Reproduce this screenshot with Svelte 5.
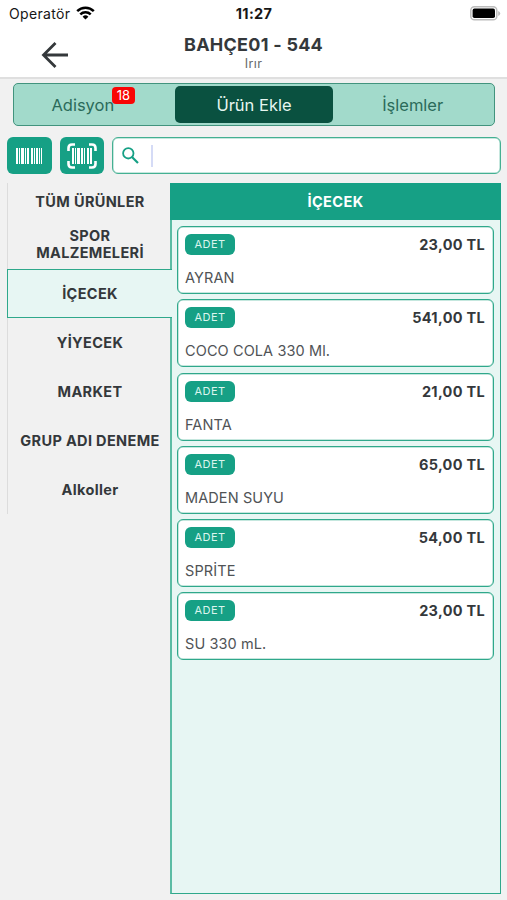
<script>
  let tabs = [
    { label: 'Adisyon', badge: 18 },
    { label: 'Ürün Ekle' },
    { label: 'İşlemler' }
  ];
  let groups = [
    'TÜM ÜRÜNLER',
    'SPOR MALZEMELERİ',
    'İÇECEK',
    'YİYECEK',
    'MARKET',
    'GRUP ADI DENEME',
    'Alkoller'
  ];
  let products = [
    { name: 'AYRAN', price: '23,00' },
    { name: 'COCO COLA 330 Ml.', price: '541,00' },
    { name: 'FANTA', price: '21,00' },
    { name: 'MADEN SUYU', price: '65,00' },
    { name: 'SPRİTE', price: '54,00' },
    { name: 'SU 330 mL.', price: '23,00' }
  ];

  let activeTab = 'Ürün Ekle';
  let activeGroup = 'İÇECEK';
  let search = '';
</script>

<div class="screen">
  <header>
    <div class="status">
      <div class="carrier">
        <span>Operatör</span>
        <svg width="19" height="14" viewBox="0 0 19 14" fill="none" stroke="#000" stroke-width="2.5">
          <path d="M1.2 5.2a11.7 11.7 0 0 1 16.6 0" />
          <path d="M4.3 8.4a7.4 7.4 0 0 1 10.4 0" />
          <path d="M9.5 13.6 6.6 10.7a4.1 4.1 0 0 1 5.8 0z" fill="#000" stroke="none" />
        </svg>
      </div>
      <b>11:27</b>
      <svg class="battery" width="31" height="15" viewBox="0 0 31 15">
        <rect x=".8" y=".8" width="26" height="13" rx="3.6" fill="#fff" stroke="#bcbcbc" stroke-width="1.5" />
        <rect x="2.6" y="2.6" width="22.4" height="9.4" rx="1.8" fill="#000" />
        <path d="M28.2 5v5q2-.8 2-2.500t-2-2.500z" fill="#bcbcbc" />
      </svg>
    </div>
    <div class="title">
      <button class="back" aria-label="Geri">
        <svg width="28" height="26" viewBox="0 0 28 26" fill="none" stroke="#34383b" stroke-width="2.8">
          <path d="M27 13H3M14.500 1 2.500 13l12 12" />
        </svg>
      </button>
      <h1>BAHÇE01 - 544</h1>
      <small>Irır</small>
    </div>
  </header>

  <nav>
    {#each tabs as tab}
      <button class="tab" class:active={tab.label === activeTab} on:click={() => (activeTab = tab.label)}>
        {tab.label}
        {#if tab.badge}<span class="badge">{tab.badge}</span>{/if}
      </button>
    {/each}
  </nav>

  <div class="tools">
    <button class="scan" aria-label="Barkod">
      <svg width="26" height="16" viewBox="0 0 26 16" fill="#fff">
        <path d="M0 0h2v16H0zM3 0h1v16H3zM5 0h3v16H5zM9 0h1v16H9zM11 0h2v16h-2zM15 0h2v16h-2zM18 0h1v16h-1zM20 0h2v16h-2zM23 0h1v16h-1zM25 0h1v16h-1z" />
      </svg>
    </button>
    <button class="scan" aria-label="Barkod tara">
      <svg width="30" height="26" viewBox="0 0 30 26">
        <path d="M1.500 8V5q0-3.500 3.500-3.500h3M22 1.500h3q3.500 0 3.500 3.500v3M28.500 18v3q0 3.500-3.500 3.500h-3M8 24.500H5q-3.500 0-3.500-3.500v-3" fill="none" stroke="#fff" stroke-width="2.6" />
        <path d="M5 5h2v16H5zM8 5h1v16H8zM10 5h3v16h-3zM14 5h2v16h-2zM17 5h1v16h-1zM20 5h2v16h-2zM23 5h2v16h-2z" fill="#fff" />
      </svg>
    </button>
    <label class="search">
      <svg width="17" height="17" viewBox="0 0 17 17" fill="none" stroke="#16a085">
        <circle cx="6.300" cy="6.300" r="5.200" stroke-width="1.800" />
        <path d="m10 10 6 6" stroke-width="2.200" />
      </svg>
      <span class="caret"></span>
      <input type="text" bind:value={search} aria-label="Ara">
    </label>
  </div>

  <main>
    <aside>
      {#each groups as group}
        <button class="group" class:active={group === activeGroup} on:click={() => (activeGroup = group)}>{group}</button>
      {/each}
    </aside>
    <section>
      <h2>{activeGroup}</h2>
      <div class="list">
        {#each products as product}
          <article>
            <div class="row">
              <span class="unit">ADET</span>
              <b>{product.price} TL</b>
            </div>
            <p>{product.name}</p>
          </article>
        {/each}
      </div>
    </section>
  </main>
</div>

<style>
  :global(body) {
    background: #f1f1f1;
  }

  .screen {
    height: 900px;
    display: flex;
    flex-direction: column;
    box-sizing: border-box;
    padding-bottom: 6px;
    background: #f1f1f1;
    color: #34383b;
    font-family: Inter, "Liberation Sans", sans-serif;
    overflow: hidden;
  }

  button {
    border: 0;
    padding: 0;
    background: none;
    color: inherit;
    font-family: inherit;
  }

  svg {
    display: block;
    flex: none;
  }

  header {
    height: 79px;
    flex: none;
    box-sizing: border-box;
    background: #fff;
    border-bottom: 2px solid #dfdfdf;
  }

  .status {
    display: grid;
    grid-template-columns: 1fr auto 1fr;
    align-items: center;
    height: 27px;
    padding: 0 7px 0 9px;
    color: #161616;
    font-size: 14px;
  }

  .status b {
    margin-left: -1px;
    font-size: 14.500px;
    font-weight: 650;
    letter-spacing: 0.3px;
  }

  .carrier {
    display: flex;
    align-items: center;
    gap: 6px;
    letter-spacing: 0.35px;
  }

  .carrier svg {
    margin-top: -2px;
  }

  .battery {
    justify-self: end;
    margin-right: -1px;
  }

  .title {
    position: relative;
    text-align: center;
  }

  .back {
    position: absolute;
    left: 41px;
    top: 15px;
  }

  h1 {
    margin: 0;
    padding-top: 7px;
    font-size: 18px;
    line-height: 22px;
    font-weight: 650;
    letter-spacing: 0.25px;
  }

  small {
    display: block;
    font-size: 12.500px;
    line-height: 16px;
    letter-spacing: 0.4px;
    color: #66696b;
  }

  nav {
    display: grid;
    grid-template-columns: repeat(3, 1fr);
    flex: none;
    box-sizing: border-box;
    height: 43px;
    margin: 4px 12px 0 13px;
    padding: 2px;
    border: 1px solid #42947e;
    border-radius: 5px;
    background: #a2dacb;
  }

  .tab {
    position: relative;
    border-radius: 5px;
    color: #2b6b5a;
    font-size: 16.500px;
    letter-spacing: 0;
  }

  .tab.active {
    background: #0a5140;
    color: #e6f6f1;
  }

  .tab:first-child {
    padding-right: 25px;
  }

  .badge {
    position: absolute;
    left: 96px;
    top: 1px;
    width: 23px;
    height: 17px;
    border-radius: 4px;
    background: #f90505;
    color: #fff;
    font-size: 13px;
    line-height: 17px;
  }

  .tools {
    display: flex;
    flex: none;
    height: 37px;
    margin: 11px 6px 0 7px;
    gap: 8px;
  }

  .scan {
    display: flex;
    align-items: center;
    justify-content: center;
    width: 44.500px;
    border-radius: 6px;
    background: #16a085;
  }

  .search {
    display: flex;
    flex: 1;
    align-items: center;
    box-sizing: border-box;
    padding-left: 9px;
    border: 1px solid #44b092;
    box-shadow: inset 0 0 0 0.500px #8ccfbd;
    border-radius: 6px;
    background: #fff;
  }

  .caret {
    width: 2px;
    height: 22px;
    margin-left: 12px;
    background: #d5dbf6;
  }

  input {
    flex: 1;
    min-width: 0;
    border: 0;
    outline: none;
    background: none;
  }

  main {
    display: flex;
    flex: 1;
    min-height: 0;
    margin: 9px 6px 0 7px;
  }

  aside {
    z-index: 1;
    width: 165px;
    margin-right: -2px;
  }

  .group {
    display: block;
    width: 100%;
    height: 49px;
    box-sizing: border-box;
    padding: 0 10px 1px;
    border-left: 1px solid #dcdcdc;
    font-size: 14.500px;
    line-height: 17px;
    font-weight: 650;
    letter-spacing: 0.35px;
  }

  .group:first-child {
    height: 37px;
  }

  .group.active {
    border: 1px solid #2fa88b;
    border-right: 0;
    padding-bottom: 0;
    background: #e7f6f3;
  }

  section {
    flex: 1;
    box-sizing: border-box;
    border: 1px solid #2fa88b;
    border-left: 2px solid #5bbca4;
    background: #e7f6f3;
  }

  h2 {
    margin: -1px -1px 0 -2px;
    background: #16a085;
    color: #fff;
    font-size: 14.500px;
    line-height: 37px;
    font-weight: 650;
    letter-spacing: 0.4px;
    text-align: center;
  }

  .list {
    display: flex;
    flex-direction: column;
    gap: 5.300px;
    padding: 6px 6px 0 5px;
  }

  article {
    box-sizing: border-box;
    height: 68px;
    padding: 7px 8px 0 7px;
    border: 1px solid #2fa88b;
    box-shadow: inset 0 0 0 0.500px #8ccfbd;
    border-radius: 6px;
    background: #fff;
  }

  .row {
    display: flex;
    justify-content: space-between;
    align-items: center;
    height: 21px;
  }

  .unit {
    width: 50px;
    border-radius: 6px;
    background: #16a085;
    color: #dcf5ee;
    font-size: 11px;
    line-height: 21px;
    letter-spacing: 0.4px;
    text-align: center;
  }

  .row b {
    font-size: 14.500px;
    font-weight: 650;
    letter-spacing: 0.3px;
  }

  p {
    margin: 14px 0 0;
    font-size: 14.500px;
    line-height: 18px;
    letter-spacing: 0.1px;
    color: #505356;
  }
</style>
